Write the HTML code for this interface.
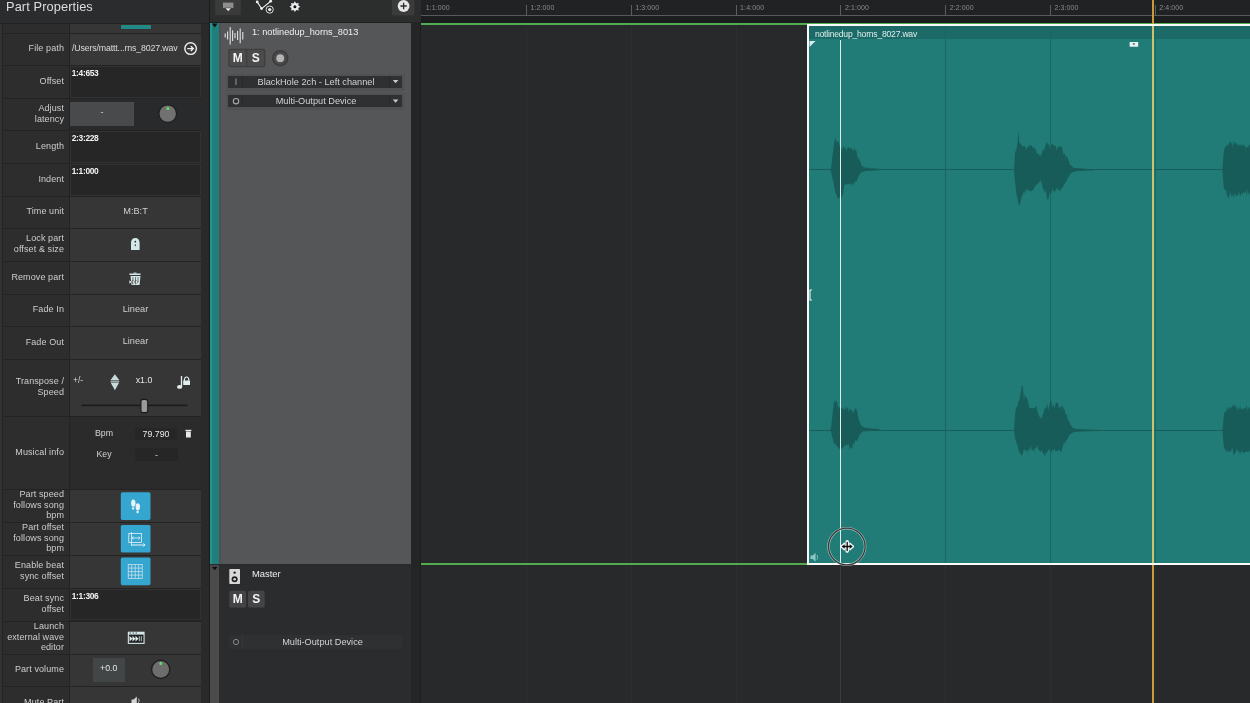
<!DOCTYPE html>
<html><head><meta charset="utf-8">
<style>
*{margin:0;padding:0;box-sizing:border-box}
html,body{width:1250px;height:703px;overflow:hidden;background:#28292b;font-family:"Liberation Sans",sans-serif;}
.a{position:absolute}
.lbl{position:absolute;left:3px;width:65.5px;background:#2d2d2e;color:#cdcdcd;font-size:9px;line-height:10.6px;letter-spacing:0.1px;text-align:right;padding-right:4.5px;padding-bottom:2px;display:flex;align-items:center;justify-content:flex-end}
.val{position:absolute;left:70px;width:131px;background:#363637}
.inp{position:absolute;left:70px;width:131px;background:#262627;border:1.5px solid #323233;color:#f2f2f2;font-size:8.4px;font-weight:bold;padding:1.5px 0 0 0.7px;line-height:9px;letter-spacing:-0.3px}
.btn{display:flex;align-items:center;justify-content:center;color:#cfcfcf;font-size:9.2px;padding-bottom:3.5px}
.tick{position:absolute;top:5px;width:1px;height:11px;background:#5d5d5f}
.rt{position:absolute;top:4px;font-size:7px;color:#8b8b8d;letter-spacing:0.1px}
.grid{position:absolute;top:25px;width:1px;height:678px;background:#2d2e30}
</style></head><body>
<div id="root" style="position:absolute;left:0;top:0;width:1250px;height:703px;will-change:transform">

<!-- LEFT PANEL -->
<div class="a" style="left:0;top:0;width:210px;height:703px;background:#232324"></div>
<div class="a" style="left:0;top:0;width:210px;height:23px;background:#2a2c2d"></div>
<div class="a" style="left:6px;top:-1px;font-size:12.8px;color:#dedede;letter-spacing:0.1px">Part Properties</div>
<div class="a" style="left:201px;top:22px;width:9px;height:681px;background:#2a2a2b"></div>
<div class="a" style="left:208.5px;top:0px;width:1.5px;height:703px;background:#1b1b1c"></div>
<div class="a" style="left:0px;top:23px;width:3px;height:680px;background:#232324"></div>
<div class="a" style="left:0px;top:23px;width:2px;height:680px;background:#323233"></div>
<div class="a" style="left:0px;top:23px;width:210px;height:1px;background:#232324"></div>

<!-- rows -->
<div class="lbl" style="top:24px;height:9px"></div>
<div class="val" style="top:24px;height:9px"></div>
<div class="a" style="left:120px;top:24px;width:32px;height:6px;background:#1f8a86;border:1px solid #3a3030"></div>

<div class="lbl" style="top:34px;height:31px">File path</div>
<div class="val" style="top:34px;height:31px;background:#383839"></div>
<div class="a" style="left:72px;top:43px;font-size:8.8px;color:#dcdcdc;letter-spacing:-0.15px">/Users/mattt...rns_8027.wav</div>

<div class="lbl" style="top:66px;height:32px">Offset</div>
<div class="inp" style="top:66px;height:32px">1:4:653</div>

<div class="lbl" style="top:99px;height:31px">Adjust<br>latency</div>
<div class="val" style="top:99px;height:31px;background:#282a2b"></div>
<div class="a btn" style="left:70px;top:102px;width:64px;height:24px;background:#484a4b">-</div>

<div class="lbl" style="top:131px;height:32px">Length</div>
<div class="inp" style="top:131px;height:32px">2:3:228</div>

<div class="lbl" style="top:164px;height:32px">Indent</div>
<div class="inp" style="top:164px;height:32px">1:1:000</div>

<div class="lbl" style="top:197px;height:31px">Time unit</div>
<div class="val btn" style="top:197px;height:31px">M:B:T</div>

<div class="lbl" style="top:229px;height:32px">Lock part<br>offset &amp; size</div>
<div class="val btn" style="top:229px;height:32px"></div>

<div class="lbl" style="top:262px;height:32px">Remove part</div>
<div class="val btn" style="top:262px;height:32px"></div>

<div class="lbl" style="top:295px;height:31px">Fade In</div>
<div class="val btn" style="top:295px;height:31px">Linear</div>

<div class="lbl" style="top:327px;height:32px">Fade Out</div>
<div class="val btn" style="top:327px;height:32px">Linear</div>

<div class="lbl" style="top:360px;height:56px">Transpose /<br>Speed</div>
<div class="val" style="top:360px;height:56px"></div>

<div class="lbl" style="top:417px;height:72px">Musical info</div>
<div class="val" style="top:417px;height:72px;background:#2b2b2c"></div>

<div class="lbl" style="top:490px;height:32px">Part speed<br>follows song<br>bpm</div>
<div class="val" style="top:490px;height:32px"></div>

<div class="lbl" style="top:523px;height:32px">Part offset<br>follows song<br>bpm</div>
<div class="val" style="top:523px;height:32px"></div>

<div class="lbl" style="top:556px;height:32px">Enable beat<br>sync offset</div>
<div class="val" style="top:556px;height:32px"></div>

<div class="lbl" style="top:589px;height:32px">Beat sync<br>offset</div>
<div class="inp" style="top:589px;height:31px">1:1:306</div>

<div class="lbl" style="top:622px;height:32px">Launch<br>external wave<br>editor</div>
<div class="val" style="top:622px;height:32px"></div>

<div class="lbl" style="top:655px;height:31px">Part volume</div>
<div class="val" style="top:655px;height:31px"></div>

<div class="lbl" style="top:687px;height:32px">Mute Part</div>
<div class="val" style="top:687px;height:32px"></div>


<!-- LEFT ICONS -->
<svg class="a" style="left:0;top:0" width="210" height="703">
 <!-- file path arrow -->
 <circle cx="190.6" cy="48.6" r="5.8" fill="none" stroke="#eeeeee" stroke-width="1.4"/>
 <path d="M187.3 48.6 H193.2 M190.8 46.2 L193.3 48.6 L190.8 51" fill="none" stroke="#eeeeee" stroke-width="1.4"/>
 <!-- latency knob -->
 <circle cx="167.7" cy="113.6" r="9.4" fill="#1f2020"/>
 <circle cx="167.7" cy="113.6" r="8.2" fill="#717171"/>
 <circle cx="167.9" cy="108.6" r="1.5" fill="#5fe06a"/>
 <!-- lock -->
 <path d="M131 250 V243.5 Q131 238 135.3 238 Q139.6 238 139.6 243.5 V250 Z" fill="#d4e8ea"/>
 <circle cx="135.3" cy="241.6" r="0.9" fill="#222"/>
 <rect x="134.8" y="244.3" width="1" height="1.8" fill="#333"/>
 <!-- remove part trash -->
 <rect x="129.5" y="273.5" width="11" height="1.5" fill="#d4e8ea"/>
 <rect x="133.5" y="272.6" width="3" height="1" fill="#d4e8ea"/>
 <path d="M130.5 276 L131.5 285 H139.5 L140.5 276 Z" fill="#d4e8ea"/>
 <path d="M133 277 V282 M135.5 277 V282 M138 277 V282" stroke="#555" stroke-width="0.8"/>
 <path d="M128.8 279.5 L132 282 L128.8 284.5 Z M132 279.5 L135.2 282 L132 284.5 Z M135.2 279.5 L138.4 282 L135.2 284.5 Z" fill="#333"/>
 <path d="M129.4 280.2 L131.5 282 L129.4 283.8 Z M132.6 280.2 L134.7 282 L132.6 283.8 Z M135.8 280.2 L137.9 282 L135.8 283.8 Z" fill="#e8f2f2"/>
 <!-- transpose arrows -->
 <path d="M114.9 374.3 L110.6 380 H119.2 Z M110.6 382.5 H119.2 L114.9 390.3 Z" fill="#c9dadc"/>
 <rect x="110.6" y="380.6" width="8.6" height="1.1" fill="#c9dadc"/>
 <!-- note with lock -->
 <path d="M181.5 376 V387" stroke="#e4eeee" stroke-width="1.3"/>
 <ellipse cx="179.6" cy="386.9" rx="2.6" ry="1.9" fill="#e4eeee"/>
 <path d="M184.3 382.6 V381 Q184.3 377 186.6 377 Q188.9 377 188.9 381 V382.6" fill="none" stroke="#e4eeee" stroke-width="1.2"/>
 <rect x="183.2" y="380.4" width="6.8" height="4.6" rx="0.6" fill="#e4eeee"/>
 <!-- slider -->
 <rect x="81.6" y="404.6" width="105.7" height="1.6" fill="#1b1b1b"/>
 <rect x="140.4" y="398.8" width="7.8" height="14.4" rx="2.2" fill="#1c1c1c"/>
 <rect x="141.5" y="399.9" width="5.6" height="12.2" rx="1.6" fill="#9a9a9a"/>
 <!-- bpm trash -->
 <rect x="185.4" y="429.8" width="6" height="1.3" fill="#e8e8e8"/>
 <rect x="186" y="431.5" width="4.8" height="6" fill="#e8e8e8"/>
 <!-- blue buttons -->
 <rect x="120.8" y="492.3" width="29.7" height="27.6" rx="1.6" fill="#35a6d0"/>
 <rect x="120.8" y="525" width="29.7" height="27.6" rx="1.6" fill="#35a6d0"/>
 <rect x="120.8" y="557.6" width="29.7" height="27.6" rx="1.6" fill="#35a6d0"/>
 <!-- footprints -->
 <ellipse cx="133.3" cy="503.2" rx="2.2" ry="3.6" fill="#e8f2f6"/>
 <ellipse cx="133.1" cy="508.4" rx="1.2" ry="1.2" fill="#e8f2f6"/>
 <ellipse cx="137.8" cy="506.8" rx="2.2" ry="3.6" fill="#e8f2f6"/>
 <ellipse cx="137.6" cy="512" rx="1.2" ry="1.2" fill="#e8f2f6"/>
 <!-- offset follows icon -->
 <g fill="none" stroke="#e8f2f6" stroke-width="0.8">
  <rect x="128.8" y="533.5" width="12.6" height="9"/>
  <path d="M131.5 532 V546"/>
  <path d="M131.5 538 H140 M133.5 536.5 L132 538 L133.5 539.5 M138.5 536.5 L140 538 L138.5 539.5"/>
  <path d="M131.5 545 H145 M143.3 543.5 L145 545 L143.3 546.5" stroke-width="1"/>
 </g>
 <!-- grid icon -->
 <g fill="none" stroke="#d8e8ee" stroke-width="0.7">
  <rect x="128.2" y="564.6" width="14" height="14"/>
  <path d="M131.7 564.6 V578.6 M135.2 564.6 V578.6 M138.7 564.6 V578.6 M128.2 568.1 H142.2 M128.2 571.6 H142.2 M128.2 575.1 H142.2"/>
 </g>
 <!-- launch external editor -->
 <rect x="127.8" y="631.7" width="16.8" height="12.2" fill="#d8e8ea"/>
 <rect x="128.9" y="634.6" width="14.6" height="8.2" fill="#1e2122"/>
 <path d="M129.5 635.8 L132.5 638.7 L129.5 641.6 Z M132.5 635.8 L135.5 638.7 L132.5 641.6 Z M135.5 635.8 L138.5 638.7 L135.5 641.6 Z" fill="#e2eeee"/>
 <path d="M139.3 636.2 V641.2 M141.3 636.2 V641.2" stroke="#e2eeee" stroke-width="0.8"/>
 <path d="M129.5 633 H131 M132.5 633 H134 M135.5 633 H137" stroke="#333" stroke-width="0.8"/>
 <!-- volume knob -->
 <circle cx="160.7" cy="669.4" r="9.8" fill="#1f1f1f"/>
 <circle cx="160.7" cy="669.4" r="8.4" fill="#6d6d6d"/>
 <circle cx="160.8" cy="663.5" r="1.5" fill="#5fe06a"/>
 <!-- mute speaker -->
 <path d="M131.5 699.5 H133.6 L136.8 696.6 V703 H131.5 Z" fill="#d4d4d4"/>
 <path d="M138.4 698.6 Q140 700.6 138.4 702.8" fill="none" stroke="#cfcfcf" stroke-width="0.9"/>
</svg>
<div class="a" style="left:70px;top:374.5px;width:16px;text-align:center;font-size:8.5px;color:#d8d8d8">+/-</div>
<div class="a" style="left:130px;top:374.5px;width:28px;text-align:center;font-size:8.8px;color:#e6e6e6">x1.0</div>
<div class="a" style="left:85px;top:428px;width:38px;text-align:center;font-size:8.8px;color:#d4d4d4">Bpm</div>
<div class="a" style="left:85px;top:448.5px;width:38px;text-align:center;font-size:8.8px;color:#d4d4d4">Key</div>
<div class="a btn" style="left:135px;top:427.6px;width:42px;height:12.6px;background:#262627;color:#e6e6e6;font-size:8.8px;padding-bottom:0">79.790</div>
<div class="a btn" style="left:135px;top:448px;width:43px;height:13.2px;background:#262627;color:#d0d0d0;padding-bottom:0">-</div>
<div class="a btn" style="left:92.7px;top:657.5px;width:32px;height:24.5px;background:#434646;color:#e6e6e6;font-size:8.8px">+0.0</div>

<!-- TRACK HEADERS -->
<div class="a" style="left:210px;top:0;width:211px;height:23px;background:#2c2d2d"></div>
<div class="a" style="left:210px;top:21.5px;width:211px;height:1.5px;background:#1f2020"></div>
<div class="a" style="left:210px;top:23px;width:9px;height:541px;background:#1f7f7b"></div>
<div class="a" style="left:219px;top:23px;width:192px;height:541px;background:#555658"></div>
<div class="a" style="left:219px;top:23px;width:2px;height:541px;background:#4d5353"></div>
<div class="a" style="left:210px;top:23px;width:2px;height:541px;background:#27958f"></div>
<div class="a" style="left:411px;top:22px;width:10px;height:681px;background:#252526"></div>
<div class="a" style="left:420px;top:22px;width:1px;height:681px;background:#1f1f20"></div>
<div class="a" style="left:210px;top:565px;width:9px;height:138px;background:#4b4b4c"></div>
<div class="a" style="left:219px;top:565px;width:192px;height:138px;background:#2b2c2d"></div>

<div class="a" style="left:252px;top:27px;font-size:9.2px;color:#f0f0f0">1: notlinedup_horns_8013</div>
<div class="a" style="left:225.5px;top:73.5px;width:179px;height:17px;background:#505152"></div>
<div class="a" style="left:225.5px;top:92.5px;width:179px;height:17px;background:#505152"></div>
<div class="a" style="left:228px;top:76px;width:174px;height:12px;background:#2f3031"></div>
<div class="a" style="left:228px;top:95px;width:174px;height:12px;background:#2f3031"></div>
<div class="a" style="left:242px;top:76px;width:1px;height:12px;background:#28292a"></div>
<div class="a" style="left:389px;top:76px;width:1px;height:12px;background:#28292a"></div>
<div class="a" style="left:242px;top:95px;width:1px;height:12px;background:#28292a"></div>
<div class="a" style="left:389px;top:95px;width:1px;height:12px;background:#28292a"></div>
<div class="a" style="left:243px;top:76px;width:146px;height:12px;color:#d3d3d3;font-size:9.2px;text-align:center;line-height:12px">BlackHole 2ch - Left channel</div>
<div class="a" style="left:243px;top:95px;width:146px;height:12px;color:#d3d3d3;font-size:9.2px;text-align:center;line-height:12px">Multi-Output Device</div>

<div class="a" style="left:252px;top:568px;font-size:9.4px;color:#eeeeee">Master</div>
<div class="a" style="left:229px;top:635px;width:173px;height:14px;background:#2f3031"></div>
<div class="a" style="left:243px;top:635px;width:159px;height:14px;color:#d3d3d3;font-size:9.2px;text-align:center;line-height:14px">Multi-Output Device</div>


<!-- TOOLBAR + TRACK ICONS -->
<svg class="a" style="left:0;top:0" width="421" height="703">
 <!-- toolbar button -->
 <rect x="215.2" y="-2" width="25.6" height="17.2" rx="1.5" fill="#3b3b3c"/>
 <rect x="223" y="2.6" width="10.4" height="5.4" fill="#8e8e8e"/>
 <path d="M225 8 L228.2 11.4 L231.4 8 Z" fill="#f4f4f4" stroke="#222" stroke-width="0.5"/>
 <!-- node icon -->
 <path d="M257.2 1.9 L261.6 8.6 L270.7 1.2" fill="none" stroke="#e6e6e6" stroke-width="1.1"/>
 <circle cx="257.2" cy="1.9" r="1.4" fill="#f2f2f2"/>
 <circle cx="261.6" cy="8.6" r="1.4" fill="#f2f2f2"/>
 <circle cx="270.7" cy="1.2" r="1.4" fill="#f2f2f2"/>
 <circle cx="269.7" cy="9.6" r="3.6" fill="#2a2a2a" stroke="#dcdcdc" stroke-width="1"/>
 <circle cx="269.7" cy="9.6" r="1.7" fill="#e6e6e6"/>
 <!-- gear -->
 <g transform="translate(294.9 6.7)">
  <path d="M0 -5.4 L1.3 -3.3 L3.8 -3.8 L3.3 -1.3 L5.4 0 L3.3 1.3 L3.8 3.8 L1.3 3.3 L0 5.4 L-1.3 3.3 L-3.8 3.8 L-3.3 1.3 L-5.4 0 L-3.3 -1.3 L-3.8 -3.8 L-1.3 -3.3 Z" fill="#e8eaf0"/>
  <circle r="3.4" fill="#e8eaf0"/>
  <circle r="1.5" fill="#111"/>
 </g>
 <!-- plus button -->
 <rect x="392" y="-2" width="22.4" height="17.6" rx="1.5" fill="#3b3b3c"/>
 <circle cx="403.6" cy="6" r="5.9" fill="#e6e6e6"/>
 <path d="M403.6 2.8 V9.2 M400.4 6 H406.8" stroke="#2a2a2a" stroke-width="1.3"/>
 <!-- strip triangles -->
 <path d="M211.8 23.6 H217.6 L214.7 27.6 Z" fill="#111"/>
 <path d="M211.8 566.8 H217.6 L214.7 570.6 Z" fill="#111"/>
 <!-- waveform icon -->
 <g stroke="#e2e2e2" stroke-width="1.1">
  <path d="M225.2 33.6 V37.6 M227.6 31.6 V39.6 M230.2 27 V44.6 M232.6 30.2 V41 M235 33 V38.2 M237.6 31 V40 M240.2 28.4 V43.2 M242.8 32 V39.4"/>
 </g>
 <!-- M S -->
 <rect x="228.2" y="48.8" width="37.2" height="18.4" rx="2.2" fill="#3e3e3f"/>
 <rect x="229.4" y="50" width="16.6" height="16" rx="1.6" fill="#4b4b4c"/>
 <rect x="247.2" y="50" width="17" height="16" rx="1.6" fill="#4b4b4c"/>
 <!-- record -->
 <circle cx="280.2" cy="58.2" r="7.4" fill="#4b4b4c" stroke="#3d3d3e" stroke-width="1.8"/>
 <circle cx="280.2" cy="58.2" r="3.9" fill="#b4b4b4"/>
 <!-- dropdown icons -->
 <rect x="235.4" y="78.5" width="1.1" height="6.5" fill="#8e8e8e"/>
 <circle cx="236" cy="101.2" r="2.7" fill="none" stroke="#a8a8a8" stroke-width="1.1"/>
 <path d="M392.8 80 H398.4 L395.6 83.2 Z" fill="#c8c8c8"/>
 <path d="M392.8 99.5 H398.4 L395.6 102.7 Z" fill="#c8c8c8"/>
 <!-- master speaker -->
 <rect x="229.3" y="569" width="10.7" height="15" rx="0.8" fill="#d8d8d8"/>
 <circle cx="234.6" cy="572.6" r="1.2" fill="#222"/>
 <circle cx="234.6" cy="579.2" r="3" fill="#1e1e1e"/>
 <circle cx="234.6" cy="579.2" r="1.3" fill="#d8d8d8"/>
 <!-- master M S -->
 <rect x="229.3" y="590.8" width="16.7" height="16.7" rx="1.6" fill="#444446"/>
 <rect x="248" y="590.8" width="16.7" height="16.7" rx="1.6" fill="#444446"/>
 <circle cx="236" cy="642" r="2.6" fill="none" stroke="#8a8a8a" stroke-width="1"/>
 <rect x="241.8" y="636" width="0.8" height="12" fill="#3a3a3b"/>
</svg>
<div class="a" style="left:229.4px;top:50px;width:16.6px;height:16px;line-height:16px;text-align:center;font-size:12px;font-weight:bold;color:#f4f4f4">M</div>
<div class="a" style="left:247.2px;top:50px;width:17px;height:16px;line-height:16px;text-align:center;font-size:12px;font-weight:bold;color:#f4f4f4">S</div>
<div class="a" style="left:229.3px;top:590.8px;width:16.7px;height:16.7px;line-height:16.7px;text-align:center;font-size:12px;font-weight:bold;color:#f4f4f4">M</div>
<div class="a" style="left:248px;top:590.8px;width:16.7px;height:16.7px;line-height:16.7px;text-align:center;font-size:12px;font-weight:bold;color:#f4f4f4">S</div>
<!-- TIMELINE -->
<div class="a" style="left:421px;top:0;width:829px;height:16px;background:#212224"></div>
<div class="a" style="left:421px;top:15px;width:829px;height:1px;background:#5a5a5c"></div>
<div class="a" style="left:421px;top:16px;width:829px;height:7px;background:#1c1d1e"></div>
<div class="rt" style="left:425.7px">1:1:000</div>
<div class="tick" style="left:526.0px"></div>
<div class="grid" style="left:526.0px"></div>
<div class="rt" style="left:530.5px">1:2:000</div>
<div class="tick" style="left:630.8px"></div>
<div class="grid" style="left:630.8px"></div>
<div class="rt" style="left:635.3px">1:3:000</div>
<div class="tick" style="left:735.6px"></div>
<div class="grid" style="left:735.6px"></div>
<div class="rt" style="left:740.1px">1:4:000</div>
<div class="tick" style="left:840.4px"></div>
<div class="grid" style="left:840.4px"></div>
<div class="rt" style="left:844.9px">2:1:000</div>
<div class="tick" style="left:945.2px"></div>
<div class="grid" style="left:945.2px"></div>
<div class="rt" style="left:949.7px">2:2:000</div>
<div class="tick" style="left:1050.0px"></div>
<div class="grid" style="left:1050.0px"></div>
<div class="rt" style="left:1054.5px">2:3:000</div>
<div class="tick" style="left:1154.8px"></div>
<div class="grid" style="left:1154.8px"></div>
<div class="rt" style="left:1159.3px">2:4:000</div>
<div class="a" style="left:421px;top:23.2px;width:829px;height:1.7px;background:#52ac4f"></div>
<div class="a" style="left:421px;top:563px;width:386px;height:2px;background:#52ac4f"></div>
<div class="a" style="left:807px;top:24px;width:443px;height:541px;background:#fbfbfb"></div>
<div class="a" style="left:809px;top:26px;width:441px;height:537px;background:#217b77"></div>
<div class="a" style="left:809px;top:26px;width:441px;height:12.5px;background:#1c6a67"></div>
<div class="a" style="left:840.4px;top:26px;width:1px;height:537px;background:#1b6662"></div>
<div class="a" style="left:945.2px;top:26px;width:1px;height:537px;background:#1b6662"></div>
<div class="a" style="left:1050.0px;top:26px;width:1px;height:537px;background:#1b6662"></div>
<div class="a" style="left:1154.8px;top:26px;width:1px;height:537px;background:#1b6662"></div>
<div class="a" style="left:815px;top:28.8px;font-size:8.6px;color:#dcefed;letter-spacing:-0.22px">notlinedup_horns_8027.wav</div>
<div class="a" style="left:809px;top:169px;width:441px;height:1px;background:#195e5b"></div>
<div class="a" style="left:809px;top:430px;width:441px;height:1px;background:#195e5b"></div>
<svg class="a" style="left:0;top:0" width="1250" height="703"><polygon points="830.0,169.6 831.1,168.0 832.2,158.4 833.3,149.4 834.4,141.5 835.5,137.6 836.6,142.7 837.7,140.8 838.8,142.7 839.9,146.8 841.0,146.4 842.1,150.7 843.2,146.1 844.3,148.2 845.4,147.1 846.5,150.9 847.6,148.1 848.7,146.9 849.8,148.2 850.9,148.6 852.0,147.9 853.1,152.0 854.2,147.8 855.3,150.6 856.4,150.4 857.5,157.2 858.6,157.7 859.7,160.8 860.8,163.0 861.9,166.4 863.0,166.5 864.1,167.2 865.2,167.3 866.3,168.0 867.4,167.7 868.5,167.8 869.6,168.0 870.7,168.4 871.8,168.2 872.9,168.3 874.0,168.3 875.1,168.4 876.2,168.4 877.3,168.6 878.4,168.7 879.5,169.1 880.6,169.5 880.6,169.7 879.5,169.9 878.4,170.3 877.3,170.3 876.2,170.6 875.1,170.4 874.0,170.7 872.9,170.7 871.8,170.8 870.7,170.9 869.6,170.9 868.5,170.8 867.4,171.0 866.3,170.8 865.2,171.4 864.1,171.4 863.0,172.0 861.9,171.9 860.8,172.7 859.7,174.3 858.6,176.4 857.5,179.0 856.4,181.4 855.3,180.7 854.2,184.4 853.1,182.7 852.0,185.9 850.9,183.2 849.8,184.6 848.7,183.9 847.6,184.6 846.5,183.8 845.4,185.1 844.3,184.8 843.2,193.6 842.1,196.1 841.0,199.4 839.9,196.9 838.8,197.8 837.7,198.9 836.6,195.1 835.5,193.1 834.4,187.8 833.3,181.6 832.2,177.5 831.1,171.6 830.0,169.6" fill="#185c59"/><polygon points="1014.0,169.8 1015.1,152.1 1016.2,150.1 1017.3,144.0 1018.4,131.4 1019.5,143.5 1020.6,142.9 1021.7,145.8 1022.8,146.0 1023.9,147.1 1025.0,145.6 1026.1,150.4 1027.2,146.7 1028.3,147.2 1029.4,144.9 1030.5,145.2 1031.6,145.5 1032.7,148.0 1033.8,146.9 1034.9,148.7 1036.0,149.7 1037.1,154.4 1038.2,153.2 1039.3,155.3 1040.4,156.0 1041.5,154.8 1042.6,150.3 1043.7,150.1 1044.8,148.2 1045.9,144.2 1047.0,142.0 1048.1,144.7 1049.2,144.4 1050.3,149.5 1051.4,143.9 1052.5,144.5 1053.6,145.0 1054.7,146.0 1055.8,146.1 1056.9,150.1 1058.0,146.7 1059.1,146.6 1060.2,146.6 1061.3,146.6 1062.4,148.4 1063.5,154.7 1064.6,153.0 1065.7,157.6 1066.8,155.7 1067.9,158.7 1069.0,161.4 1070.1,164.9 1071.2,165.3 1072.3,166.5 1073.4,167.7 1074.5,168.1 1075.6,167.8 1076.7,168.1 1077.8,168.2 1078.9,168.3 1080.0,168.3 1081.1,168.3 1082.2,168.5 1083.3,168.5 1084.4,168.6 1085.5,168.7 1086.6,168.7 1087.7,169.0 1088.8,168.9 1089.9,169.0 1091.0,169.1 1092.1,169.1 1093.2,169.2 1094.3,169.6 1094.3,170.0 1093.2,170.3 1092.1,170.4 1091.0,170.5 1089.9,170.4 1088.8,170.6 1087.7,170.5 1086.6,170.8 1085.5,170.7 1084.4,170.8 1083.3,170.7 1082.2,170.9 1081.1,171.0 1080.0,171.1 1078.9,170.8 1077.8,171.3 1076.7,171.1 1075.6,171.4 1074.5,171.4 1073.4,171.9 1072.3,172.2 1071.2,173.1 1070.1,174.3 1069.0,176.1 1067.9,178.1 1066.8,180.7 1065.7,182.0 1064.6,183.9 1063.5,185.4 1062.4,188.1 1061.3,189.1 1060.2,191.2 1059.1,188.7 1058.0,190.6 1056.9,187.5 1055.8,190.2 1054.7,191.5 1053.6,191.2 1052.5,188.8 1051.4,193.7 1050.3,190.5 1049.2,194.8 1048.1,200.6 1047.0,198.5 1045.9,189.4 1044.8,193.3 1043.7,189.4 1042.6,187.7 1041.5,182.4 1040.4,180.0 1039.3,182.0 1038.2,183.1 1037.1,184.5 1036.0,185.1 1034.9,186.4 1033.8,189.1 1032.7,190.3 1031.6,191.1 1030.5,191.4 1029.4,190.5 1028.3,189.9 1027.2,190.8 1026.1,188.3 1025.0,194.0 1023.9,190.6 1022.8,195.5 1021.7,195.6 1020.6,202.1 1019.5,205.1 1018.4,204.2 1017.3,197.7 1016.2,192.7 1015.1,182.4 1014.0,169.8" fill="#185c59"/><polygon points="1222.5,169.8 1223.6,152.9 1224.7,147.8 1225.8,147.1 1226.9,144.4 1228.0,145.8 1229.1,143.3 1230.2,142.1 1231.3,142.5 1232.4,146.8 1233.5,141.1 1234.6,144.8 1235.7,141.7 1236.8,144.5 1237.9,144.5 1239.0,145.8 1240.1,143.7 1241.2,146.4 1242.3,143.9 1243.4,146.3 1244.5,144.8 1245.6,148.8 1246.7,146.5 1247.8,147.6 1248.9,145.8 1250.0,143.9 1250.0,191.9 1248.9,195.2 1247.8,189.1 1246.7,195.7 1245.6,190.1 1244.5,193.5 1243.4,192.0 1242.3,194.2 1241.2,193.2 1240.1,196.4 1239.0,191.6 1237.9,195.6 1236.8,194.9 1235.7,196.4 1234.6,192.9 1233.5,197.9 1232.4,194.4 1231.3,196.6 1230.2,191.6 1229.1,197.3 1228.0,197.7 1226.9,195.1 1225.8,188.9 1224.7,191.0 1223.6,186.2 1222.5,169.8" fill="#185c59"/><polygon points="830.0,429.9 831.1,427.8 832.2,417.4 833.3,407.3 834.4,400.1 835.5,402.3 836.6,400.6 837.7,405.6 838.8,408.0 839.9,407.1 841.0,407.8 842.1,408.1 843.2,408.9 844.3,410.3 845.4,406.3 846.5,410.1 847.6,406.4 848.7,412.2 849.8,408.5 850.9,409.5 852.0,410.9 853.1,413.3 854.2,410.9 855.3,408.0 856.4,409.0 857.5,413.1 858.6,419.1 859.7,421.9 860.8,424.4 861.9,426.3 863.0,426.8 864.1,427.5 865.2,427.6 866.3,427.9 867.4,428.0 868.5,428.1 869.6,428.2 870.7,428.5 871.8,428.6 872.9,428.7 874.0,428.6 875.1,428.6 876.2,428.7 877.3,428.7 878.4,428.9 879.5,429.4 880.6,429.7 880.6,430.0 879.5,430.1 878.4,430.4 877.3,430.5 876.2,430.7 875.1,431.0 874.0,431.0 872.9,431.0 871.8,431.0 870.7,431.0 869.6,431.1 868.5,431.1 867.4,431.2 866.3,431.3 865.2,431.2 864.1,431.3 863.0,431.4 861.9,432.2 860.8,434.0 859.7,434.4 858.6,437.6 857.5,439.9 856.4,440.9 855.3,439.9 854.2,444.4 853.1,442.8 852.0,449.4 850.9,447.1 849.8,449.8 848.7,443.7 847.6,445.4 846.5,444.3 845.4,446.6 844.3,445.6 843.2,448.6 842.1,447.8 841.0,449.7 839.9,448.7 838.8,448.4 837.7,446.7 836.6,446.5 835.5,442.4 834.4,444.8 833.3,440.4 832.2,437.2 831.1,431.6 830.0,429.9" fill="#185c59"/><polygon points="1014.0,430.5 1015.1,414.5 1016.2,406.8 1017.3,407.6 1018.4,401.8 1019.5,399.3 1020.6,393.2 1021.7,386.8 1022.8,385.1 1023.9,399.9 1025.0,393.9 1026.1,398.0 1027.2,398.2 1028.3,403.4 1029.4,407.6 1030.5,408.5 1031.6,408.1 1032.7,407.7 1033.8,408.5 1034.9,407.8 1036.0,405.7 1037.1,409.8 1038.2,412.9 1039.3,416.8 1040.4,417.1 1041.5,419.6 1042.6,415.5 1043.7,411.5 1044.8,408.4 1045.9,408.3 1047.0,403.3 1048.1,410.6 1049.2,406.2 1050.3,401.9 1051.4,401.1 1052.5,407.7 1053.6,404.7 1054.7,408.3 1055.8,402.9 1056.9,402.5 1058.0,403.1 1059.1,408.5 1060.2,407.1 1061.3,406.9 1062.4,405.3 1063.5,408.9 1064.6,409.6 1065.7,415.0 1066.8,414.2 1067.9,420.0 1069.0,420.9 1070.1,423.9 1071.2,425.6 1072.3,427.4 1073.4,427.9 1074.5,428.5 1075.6,428.7 1076.7,428.9 1077.8,428.7 1078.9,429.1 1080.0,429.0 1081.1,429.2 1082.2,429.2 1083.3,429.5 1084.4,429.3 1085.5,429.2 1086.6,429.4 1087.7,429.5 1088.8,429.4 1089.9,429.5 1091.0,429.5 1092.1,429.8 1093.2,429.6 1094.3,429.8 1095.4,429.7 1096.5,429.8 1097.6,429.7 1098.7,430.0 1099.8,430.2 1100.9,430.5 1100.9,430.5 1099.8,430.7 1098.7,430.9 1097.6,431.0 1096.5,431.1 1095.4,431.1 1094.3,431.0 1093.2,431.2 1092.1,431.2 1091.0,431.2 1089.9,431.2 1088.8,431.3 1087.7,431.3 1086.6,431.3 1085.5,431.3 1084.4,431.4 1083.3,431.5 1082.2,431.6 1081.1,431.5 1080.0,431.7 1078.9,431.5 1077.8,431.8 1076.7,431.9 1075.6,432.0 1074.5,432.0 1073.4,432.5 1072.3,432.8 1071.2,433.7 1070.1,434.3 1069.0,436.0 1067.9,438.1 1066.8,440.2 1065.7,441.3 1064.6,443.6 1063.5,443.7 1062.4,447.6 1061.3,452.3 1060.2,451.5 1059.1,449.2 1058.0,451.1 1056.9,450.5 1055.8,452.3 1054.7,448.2 1053.6,451.3 1052.5,449.2 1051.4,452.4 1050.3,450.1 1049.2,450.3 1048.1,449.6 1047.0,453.3 1045.9,452.6 1044.8,456.2 1043.7,453.5 1042.6,452.6 1041.5,449.9 1040.4,452.1 1039.3,450.3 1038.2,449.2 1037.1,445.1 1036.0,448.3 1034.9,448.3 1033.8,451.7 1032.7,449.5 1031.6,449.8 1030.5,445.3 1029.4,451.5 1028.3,448.3 1027.2,453.0 1026.1,449.8 1025.0,450.5 1023.9,449.1 1022.8,453.4 1021.7,455.9 1020.6,453.4 1019.5,453.0 1018.4,450.1 1017.3,443.9 1016.2,442.6 1015.1,438.5 1014.0,430.5" fill="#185c59"/><polygon points="1222.5,430.2 1223.6,417.5 1224.7,411.0 1225.8,412.6 1226.9,406.5 1228.0,411.5 1229.1,406.5 1230.2,408.5 1231.3,407.2 1232.4,407.0 1233.5,403.8 1234.6,406.7 1235.7,405.1 1236.8,411.3 1237.9,406.5 1239.0,410.8 1240.1,405.5 1241.2,410.1 1242.3,408.5 1243.4,408.9 1244.5,408.4 1245.6,408.1 1246.7,405.3 1247.8,411.6 1248.9,406.8 1250.0,409.1 1250.0,449.8 1248.9,451.9 1247.8,451.5 1246.7,451.7 1245.6,451.5 1244.5,453.1 1243.4,452.7 1242.3,451.7 1241.2,451.1 1240.1,454.8 1239.0,450.9 1237.9,451.8 1236.8,448.7 1235.7,452.3 1234.6,454.3 1233.5,454.7 1232.4,447.6 1231.3,450.2 1230.2,452.1 1229.1,452.1 1228.0,450.0 1226.9,452.2 1225.8,450.6 1224.7,448.9 1223.6,445.2 1222.5,430.2" fill="#185c59"/></svg>
<div class="a" style="left:840px;top:40px;width:1px;height:523px;background:#e4ecec"></div>
<div class="a" style="left:840px;top:565px;width:1px;height:138px;background:#3a3b3d"></div>
<div class="a" style="left:1152px;top:0;width:1.5px;height:24px;background:#c99a3a"></div>
<div class="a" style="left:1152px;top:26px;width:1.5px;height:537px;background:#c9c26f"></div>
<div class="a" style="left:1152px;top:565px;width:1.5px;height:138px;background:#c99a3a"></div>
<svg class="a" style="left:0;top:0" width="1250" height="703">
 <path d="M809.5 41 H815.5 L809.5 47 Z" fill="#d6ecea"/>
 <rect x="1129.6" y="42" width="8.6" height="4.8" rx="0.5" fill="#e8f2f2"/>
 <path d="M1132.4 43.4 H1135.4 L1133.9 45 Z" fill="#1d3c3a"/>
 <path d="M812 290 H810 V300 H812" fill="none" stroke="#e8f0f0" stroke-width="1.1"/>
 <path d="M810.5 555.5 H812.6 L815.6 552.8 V561.8 L812.6 559 H810.5 Z" fill="#8cc6c4"/>
 <path d="M817 555 Q818.5 557.3 817 559.6" fill="none" stroke="#8cc6c4" stroke-width="0.9"/>
 <circle cx="846.8" cy="546.5" r="18.3" fill="none" stroke="#c8d8d6" stroke-width="2.6" opacity="0.75"/>
 <circle cx="846.8" cy="546.5" r="18.3" fill="none" stroke="#3a3a3a" stroke-width="1.3"/>
 <g transform="translate(847.2 546.5)">
  <path d="M-5 0 H5 M0 -4.6 V4.6" stroke="#f2f6f6" stroke-width="3.6" stroke-linecap="round"/>
  <path d="M-6 0 L-2.8 -3.2 V3.2 Z M6 0 L2.8 -3.2 V3.2 Z" fill="#f2f6f6" stroke="#f2f6f6" stroke-width="1.6" stroke-linejoin="round"/>
  <path d="M-4.5 0 H4.5 M0 -4 V4" stroke="#0e0e0e" stroke-width="1.3" stroke-linecap="round"/>
  <path d="M-5.2 0 L-2.6 -2.3 V2.3 Z M5.2 0 L2.6 -2.3 V2.3 Z" fill="#0e0e0e"/>
 </g>
</svg>
</div></body></html>
